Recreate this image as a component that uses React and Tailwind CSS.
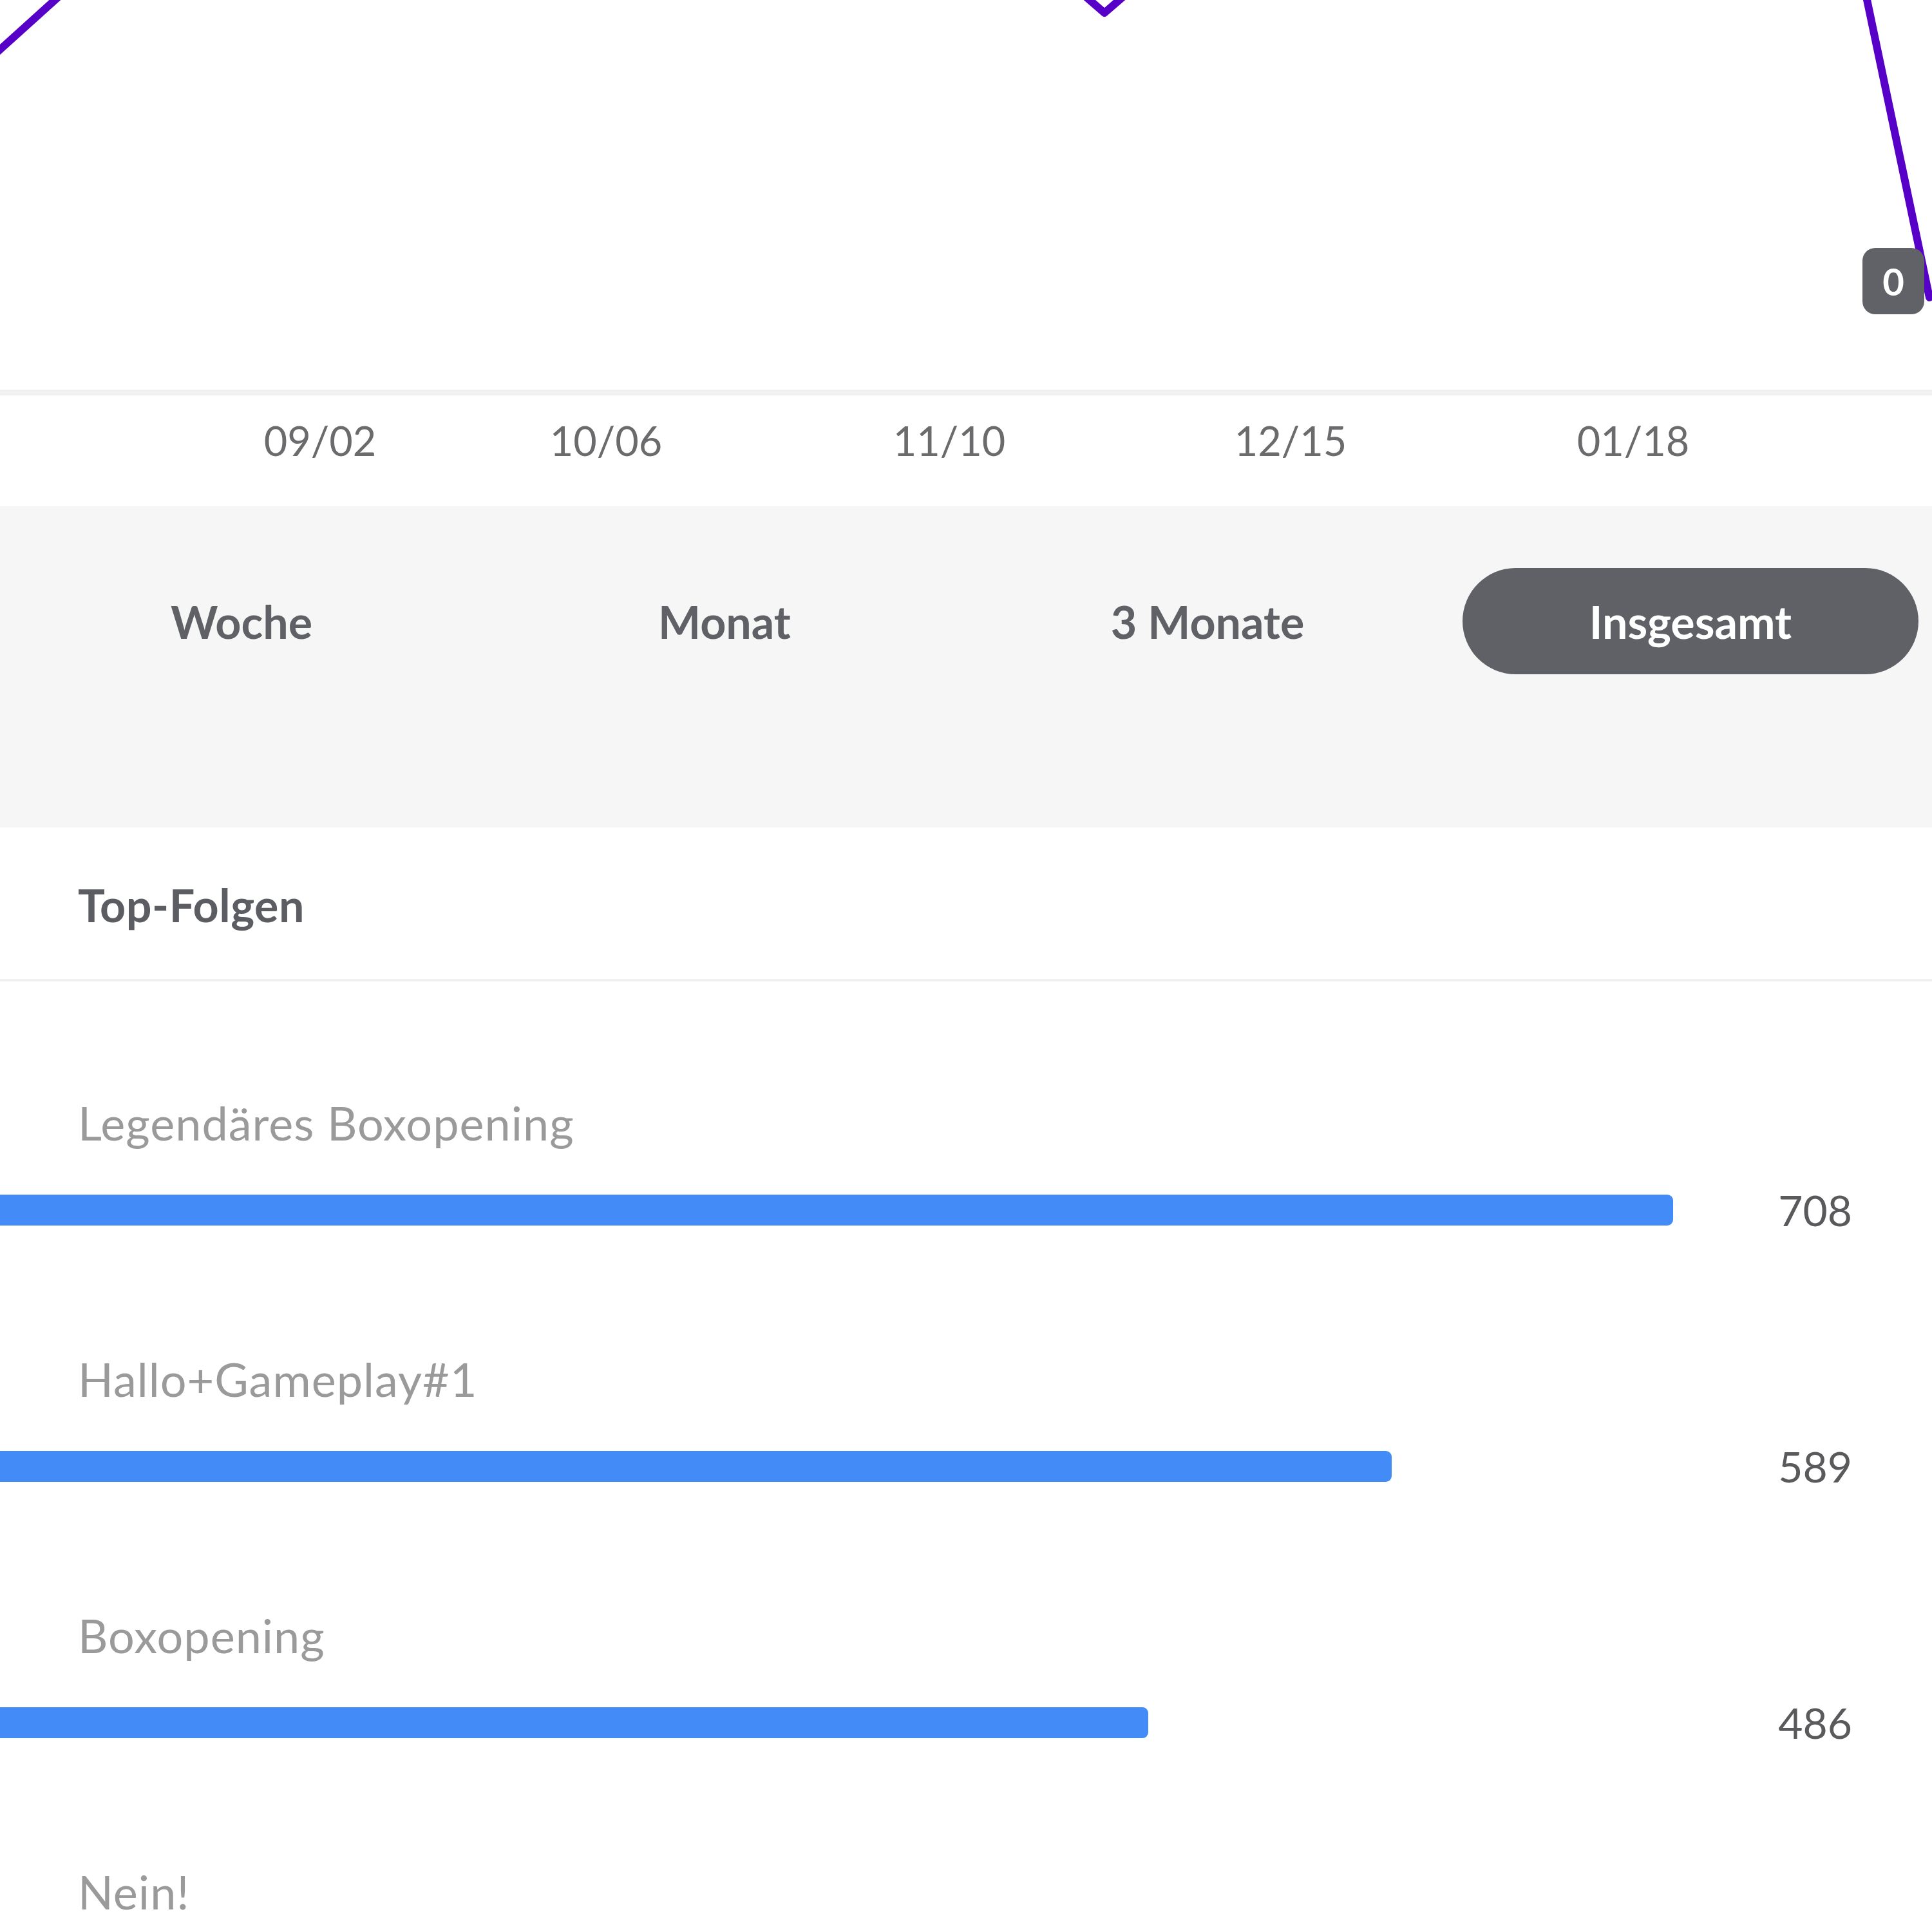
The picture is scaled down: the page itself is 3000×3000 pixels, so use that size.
import React from "react";

const ticks = [
  { label: "09/02", x: 497 },
  { label: "10/06", x: 941 },
  { label: "11/10", x: 1474 },
  { label: "12/15", x: 2004 },
  { label: "01/18", x: 2536 },
];

const tabs = ["Woche", "Monat", "3 Monate", "Insgesamt"];

const items = [
  { title: "Legendäres Boxopening", value: 708 },
  { title: "Hallo+Gameplay#1", value: 589 },
  { title: "Boxopening", value: 486 },
  { title: "Nein!", value: 402 },
];

export default function App() {
  const max = 708;
  return (
    <div className="w-[3000px] bg-white" style={{ fontFamily: "Lato, 'Open Sans', sans-serif" }}>
      {/* Chart */}
      <div className="relative h-[605px] w-full overflow-hidden bg-white">
        <svg className="absolute inset-0" width="3000" height="605" viewBox="0 0 3000 605">
          <g fill="none" stroke="#5600c8" strokeWidth="12" strokeLinecap="round" strokeLinejoin="round">
            <polyline points="-20,95 92,-6" />
            <polyline points="1678,-12 1715,20 1752,-12" />
            <polyline points="2897,-10 2996,462" />
          </g>
        </svg>
        <div className="absolute left-[2892px] top-[385px] flex h-[103px] w-[96px] items-center justify-center rounded-[20px] bg-[#606267] text-[58px] font-bold leading-none text-white">
          0
        </div>
      </div>
      {/* separator */}
      <div className="h-[9px] bg-[#f1f1f2]" />
      {/* axis labels */}
      <div className="relative h-[172px] bg-white">
        {ticks.map((t) => (
          <div
            key={t.label}
            className="absolute top-[38px] -translate-x-1/2 text-[63px] leading-none text-[#6b6b6d]"
            style={{ left: t.x }}
          >
            {t.label}
          </div>
        ))}
      </div>
      {/* tabs */}
      <div className="h-[499px] bg-[#f6f6f7] pt-[96px]">
        <div className="grid grid-cols-4">
          {tabs.map((t, i) => (
            <div key={t} className="flex h-[165px] items-center justify-center px-[21px]">
              {i === 3 ? (
                <div className="flex h-full w-full items-center justify-center rounded-full bg-[#5f6166] text-[70px] font-bold leading-none text-white">
                  {t}
                </div>
              ) : (
                <div className="text-[70px] font-bold leading-none text-[#5f6166]">{t}</div>
              )}
            </div>
          ))}
        </div>
      </div>
      {/* header */}
      <div className="h-[239px] border-b-[4px] border-[#f1f1f2] bg-white pl-[121px] pt-[85px]">
        <div className="text-[70px] font-bold leading-none tracking-[0.5px] text-[#5b5d62]">Top-Folgen</div>
      </div>
      {/* list */}
      <div className="flex flex-col gap-[194px] pt-[184px]">
        {items.map((it) => (
          <div key={it.title} className="flex flex-col">
            <div className="pl-[121px] text-[72px] leading-[70px] tracking-[1px] text-[#9a9a9a]">{it.title}</div>
            <div className="mt-[68px] flex h-[66px] items-center pr-[124px]">
              <div className="flex-1">
                <div
                  className="h-[48px] rounded-r-[9px] bg-[#438cf8]"
                  style={{ width: `${(it.value / max) * 100}%` }}
                />
              </div>
              <div className="w-[278px] text-right text-[66px] leading-none text-[#5a5a5c]">{it.value}</div>
            </div>
          </div>
        ))}
      </div>
    </div>
  );
}
